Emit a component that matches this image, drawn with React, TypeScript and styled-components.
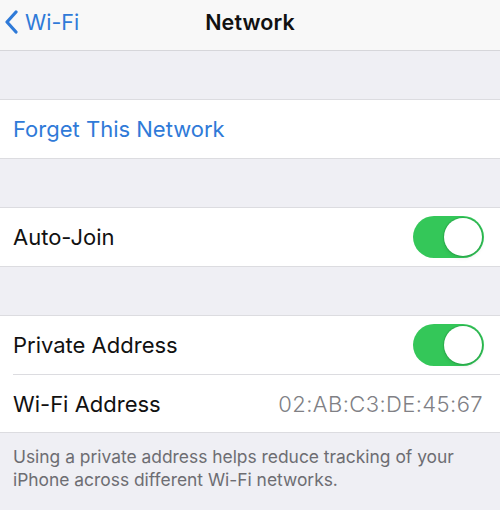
import React from "react";
import styled, { createGlobalStyle } from "styled-components";

const GlobalStyle = createGlobalStyle`
  * {
    box-sizing: border-box;
    margin: 0;
    padding: 0;
  }

  body {
    background-color: #efeff4;
    font-family: "Inter", "Roboto", sans-serif;
    -webkit-font-smoothing: antialiased;
  }
`;

const Screen = styled.div`
  width: 500px;
  height: 510px;
  overflow: hidden;
  background-color: #efeff4;
`;

const NavBar = styled.header`
  height: 51px;
  display: grid;
  grid-template-columns: 1fr auto 1fr;
  align-items: center;
  background-color: #f8f8f8;
  border-bottom: 1px solid #d6d6da;
`;

const BackLink = styled.div`
  display: flex;
  align-items: center;
  gap: 7px;
  padding-left: 4px;
  color: #2f7ad8;
  font-size: 21.5px;
  margin-top: -7px;
`;

const Title = styled.h1`
  font-size: 21.5px;
  font-weight: 600;
  color: #111;
  margin-top: -7px;
  letter-spacing: 0.1px;
`;

const Group = styled.section`
  margin-top: 48px;
  background-color: #fff;
  border-top: 1px solid #dcdce0;
  border-bottom: 1px solid #dcdce0;
`;

const Row = styled.div<{ $divider?: boolean }>`
  height: 58px;
  display: flex;
  align-items: center;
  justify-content: space-between;
  margin-left: 13px;
  padding-right: 17px;
  border-top: ${(p) => (p.$divider ? "1px solid #dcdce0" : "none")};
`;

const Label = styled.span<{ $action?: boolean }>`
  font-size: 22px;
  color: ${(p) => (p.$action ? "#2f7ad8" : "#111")};
  letter-spacing: 0;
`;

const Value = styled.span`
  font-size: 22px;
  font-weight: 300;
  color: #808085;
  letter-spacing: 0.4px;
`;

const Track = styled.div<{ $on: boolean }>`
  width: 71px;
  height: 42px;
  border-radius: 21px;
  padding: 2px;
  display: flex;
  justify-content: ${(p) => (p.$on ? "flex-end" : "flex-start")};
  background-color: ${(p) => (p.$on ? "#34c759" : "#e5e5ea")};
  margin-right: -1px;
`;

const Knob = styled.div`
  width: 38px;
  height: 38px;
  border-radius: 50%;
  background-color: #fff;
  box-shadow: 0 0 0 1px rgba(30, 140, 60, 0.35), 0 2px 4px rgba(0, 0, 0, 0.1);
`;

const Footnote = styled.p`
  padding: 12px 30px 0 13px;
  font-size: 17.4px;
  line-height: 23px;
  color: #6d6d72;
`;

const Toggle = ({ on }: { on: boolean }) => (
  <Track $on={on}>
    <Knob />
  </Track>
);

const Chevron = () => (
  <svg width="14" height="24" viewBox="0 0 14 24" fill="none">
    <path
      d="M12 2 L3 12 L12 22"
      stroke="#2f7ad8"
      strokeWidth="3.2"
      strokeLinecap="round"
      strokeLinejoin="round"
    />
  </svg>
);

export default function App() {
  return (
    <Screen>
      <GlobalStyle />
      <NavBar>
        <BackLink>
          <Chevron />
          <span>Wi-Fi</span>
        </BackLink>
        <Title>Network</Title>
        <div />
      </NavBar>

      <Group>
        <Row>
          <Label $action>Forget This Network</Label>
        </Row>
      </Group>

      <Group>
        <Row>
          <Label>Auto-Join</Label>
          <Toggle on />
        </Row>
      </Group>

      <Group>
        <Row>
          <Label>Private Address</Label>
          <Toggle on />
        </Row>
        <Row $divider>
          <Label>Wi-Fi Address</Label>
          <Value>02:AB:C3:DE:45:67</Value>
        </Row>
      </Group>

      <Footnote>
        Using a private address helps reduce tracking of your iPhone across
        different Wi-Fi networks.
      </Footnote>
    </Screen>
  );
}
